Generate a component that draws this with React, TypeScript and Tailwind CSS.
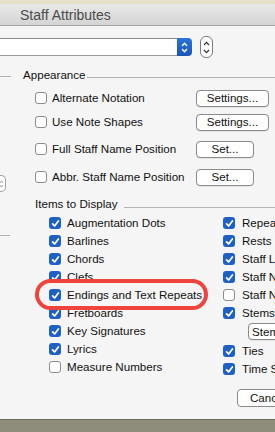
import React from "react";

const FONT = { fontFamily: '"Liberation Sans", Arial, sans-serif' };

function Check({ on }: { on: boolean }) {
  return on ? (
    <div className="w-[12px] h-[12px] rounded-[3px] bg-[#1f60c6] flex items-center justify-center shrink-0">
      <svg width="9" height="9" viewBox="0 0 9 9">
        <path d="M1.6 4.9 L3.6 7 L7.4 1.9" fill="none" stroke="white" strokeWidth="1.7" strokeLinecap="round" strokeLinejoin="round" />
      </svg>
    </div>
  ) : (
    <div className="w-[12px] h-[12px] rounded-[3px] bg-white border border-[#8c8c8c] shrink-0" />
  );
}

function Btn({ w, label }: { w: string; label: string }) {
  return (
    <div className={`${w} h-[17px] shrink-0 rounded-[4px] border border-[#8a8a8a] bg-white flex items-center justify-center text-[11.6px] text-[#111] shadow-[0_0.5px_0.5px_rgba(0,0,0,0.12)]`}>
      {label}
    </div>
  );
}

function Item({ on, label, gap }: { on: boolean; label: string; gap: string }) {
  return (
    <div className={`h-[18px] flex items-center ${gap} whitespace-nowrap`}>
      <Check on={on} />
      <span className="text-[11.6px] leading-none">{label}</span>
    </div>
  );
}

function AppRow({ label, btn, wide, mt }: { label: string; btn: string; wide: boolean; mt: string }) {
  return (
    <div className={`${mt} h-[18px] pl-[23px] flex items-center`}>
      <div className="w-[161px] flex items-center gap-[5px] whitespace-nowrap">
        <Check on={false} />
        <span className="text-[11.6px] leading-none">{label}</span>
      </div>
      <Btn w={wide ? "w-[73px]" : "w-[58px]"} label={btn} />
    </div>
  );
}

export default function App() {
  const left: [boolean, string][] = [
    [true, "Augmentation Dots"],
    [true, "Barlines"],
    [true, "Chords"],
    [true, "Clefs"],
    [true, "Endings and Text Repeats"],
    [true, "Fretboards"],
    [true, "Key Signatures"],
    [true, "Lyrics"],
    [false, "Measure Numbers"],
  ];
  const right: [boolean, string][] = [
    [true, "Repeat Bars"],
    [true, "Rests"],
    [true, "Staff Lines"],
    [true, "Staff Name: Full"],
    [false, "Staff Name: Abbr."],
    [true, "Stems"],
  ];
  return (
    <div className="relative w-[275px] h-[432px] overflow-hidden flex flex-col bg-[#8e8d7c] text-[#111]" style={FONT}>
      <div className="h-[4px] shrink-0 bg-[#e8e1ca]" />
      <div className="h-[416px] shrink-0 flex flex-col bg-[#f5f5f5] border-b border-[#6b6a5e] overflow-hidden">
        {/* title bar */}
        <div className="h-[22px] shrink-0 bg-linear-to-b from-[#e9e9e9] to-[#d4d4d4] border-b border-[#a3a3a3] flex items-center pl-[20px]">
          <span className="text-[14px] leading-none text-[#4b4b4b]">Staff Attributes</span>
        </div>
        {/* popup row */}
        <div className="mt-[10px] h-[22px] shrink-0 flex items-center">
          <div className="w-[192px] h-[18px] flex">
            <div className="flex-1 bg-white border-y border-[#9a9a9a] border-t-[#8a8a8a]" />
            <div className="w-[15px] rounded-r-[4px] bg-linear-to-b from-[#2c73d9] to-[#1a56b8] flex flex-col items-center justify-center gap-[1px]">
              <svg width="7" height="5" viewBox="0 0 7 5"><path d="M1 4 L3.5 1.3 L6 4" fill="none" stroke="white" strokeWidth="1.3" /></svg>
              <svg width="7" height="5" viewBox="0 0 7 5"><path d="M1 1 L3.5 3.7 L6 1" fill="none" stroke="white" strokeWidth="1.3" /></svg>
            </div>
          </div>
          <div className="ml-[8px] w-[13px] h-[22px] rounded-[6px] border border-[#7a7a7a] bg-white flex flex-col items-center justify-center gap-[3px]">
            <svg width="7" height="5" viewBox="0 0 7 5"><path d="M1 4 L3.5 1.3 L6 4" fill="none" stroke="#333" strokeWidth="1.2" /></svg>
            <svg width="7" height="5" viewBox="0 0 7 5"><path d="M1 1 L3.5 3.7 L6 1" fill="none" stroke="#333" strokeWidth="1.2" /></svg>
          </div>
        </div>
        {/* content */}
        <div className="flex flex-1">
          <div className="w-[12px] shrink-0 flex flex-col">
            <div className="mt-[18px] h-px w-[11px] bg-[#b3b3b3]" />
            <div className="mt-[98px] w-[6px] h-[17px] border border-l-0 border-[#a0a0a0] rounded-r-[5px] bg-white flex items-center">
              <svg width="5" height="8" viewBox="0 0 5 8"><path d="M0 2.5 L1.5 1.3 L3 2.5 M0 5.5 L1.5 6.7 L3 5.5" fill="none" stroke="#888" strokeWidth="1" /></svg>
            </div>
            <div className="mt-[43px] h-px w-[10px] bg-[#b3b3b3]" />
          </div>
          <div className="flex-1 flex flex-col">
            <div className="mt-[10px] h-[14px] pl-[11px] flex items-center">
              <span className="text-[11.6px] leading-none whitespace-nowrap">Appearance</span>
              <div className="flex-1 self-start mt-[9px] ml-[1px] h-px bg-[#b3b3b3]" />
            </div>
            <AppRow mt="mt-[7px]" label="Alternate Notation" btn="Settings..." wide />
            <AppRow mt="mt-[6px]" label="Use Note Shapes" btn="Settings..." wide />
            <AppRow mt="mt-[9px]" label="Full Staff Name Position" btn="Set..." wide={false} />
            <AppRow mt="mt-[10px]" label="Abbr. Staff Name Position" btn="Set..." wide={false} />
            <div className="mt-[11px] h-[14px] pl-[23px] flex items-center">
              <span className="text-[11.6px] leading-none whitespace-nowrap">Items to Display</span>
              <div className="flex-1 self-start mt-[10px] ml-[7px] h-px bg-[#b3b3b3]" />
            </div>
            <div className="mt-[3px] pl-[37px] flex">
              <div className="w-[174px] shrink-0 flex flex-col">
                {left.map(([on, l]) => (
                  <Item key={l} on={on} label={l} gap="gap-[6px]" />
                ))}
              </div>
              <div className="flex flex-col shrink-0">
                {right.map(([on, l]) => (
                  <Item key={l} on={on} label={l} gap="gap-[7px]" />
                ))}
                <div className="mt-[1px] ml-[25px]">
                  <Btn w="w-[90px]" label="Stem Settings..." />
                </div>
                <div className="mt-[2px]">
                  <Item on={true} label="Ties" gap="gap-[7px]" />
                </div>
                <Item on={true} label="Time Signatures" gap="gap-[7px]" />
              </div>
            </div>
            <div className="mt-[11px] ml-[225px] flex">
              <div className="w-[80px] h-[18px] shrink-0 rounded-[4px] border border-[#8a8a8a] bg-white flex items-center pl-[12px] text-[11.6px] whitespace-nowrap">
                Cancel
              </div>
            </div>
          </div>
        </div>
      </div>
      {/* red annotation */}
      <div className="absolute left-[35px] top-[279px] w-[173px] h-[31px] rounded-full border-[4px] border-[#ef443e]" />
    </div>
  );
}
